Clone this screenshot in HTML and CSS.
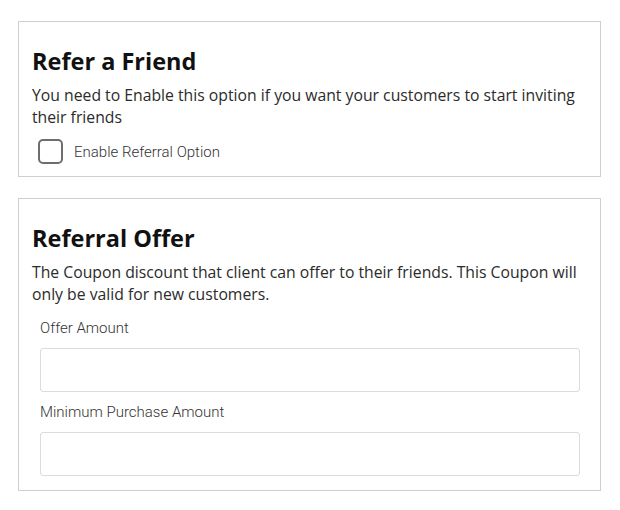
FILE: index.html
```html
<!DOCTYPE html>
<html>
<head>
<meta charset="utf-8">
<link rel="stylesheet" href="styles.css">
</head>
<body>
<div class="page">
  <section class="card card-friend">
    <h2 class="title">Refer a Friend</h2>
    <p class="desc">You need to Enable this option if you want your customers to start inviting their friends</p>
    <label class="check">
      <span class="box"></span>
      <span class="check-label">Enable Referral Option</span>
    </label>
  </section>
  <section class="card card-offer">
    <h2 class="title">Referral Offer</h2>
    <p class="desc">The Coupon discount that client can offer to their friends. This Coupon will only be valid for new customers.</p>
    <div class="fields">
      <div class="field">
        <div class="field-label">Offer Amount</div>
        <div class="input"></div>
      </div>
      <div class="field">
        <div class="field-label">Minimum Purchase Amount</div>
        <div class="input"></div>
      </div>
    </div>
  </section>
</div>
</body>
</html>
```
FILE: styles.css
```css
html, body { margin: 0; padding: 0; background: #fff; }
body { font-family: "Open Sans", "Lato", sans-serif; color: #222; }
.page {
  padding: 21px 19px 0 18px;
  display: flex;
  flex-direction: column;
  gap: 21px;
}
.card {
  border: 1px solid #cfcfcf;
  padding: 0 13px;
  box-sizing: border-box;
}
.card-friend { height: 156px; padding-top: 24px; }
.card-offer { height: 293px; padding-top: 24px; }
.title {
  margin: 0;
  font-size: 23.5px;
  font-weight: 700;
  line-height: 30px;
  color: #111;
}
.desc {
  margin: 8px 0 0;
  font-size: 15.75px;
  line-height: 22px;
  color: #2b2b2b;
}
.check {
  display: flex;
  align-items: center;
  gap: 11px;
  margin: 11px 0 0 6px;
}
.box {
  width: 21px;
  height: 21px;
  border: 2px solid #6e6e6e;
  border-radius: 5px;
}
.check-label { font-size: 15px; color: #333; font-family: "Roboto", sans-serif; font-weight: 300; }
.fields { padding: 0 7px 0 8px; margin-top: 14px; display: flex; flex-direction: column; gap: 11px; }
.field-label { font-size: 15px; color: #333; font-family: "Roboto", sans-serif; font-weight: 300; line-height: 18px; }
.input {
  margin-top: 11px;
  height: 42px;
  border: 1px solid #dcdcdc;
  border-radius: 3px;
}
```
